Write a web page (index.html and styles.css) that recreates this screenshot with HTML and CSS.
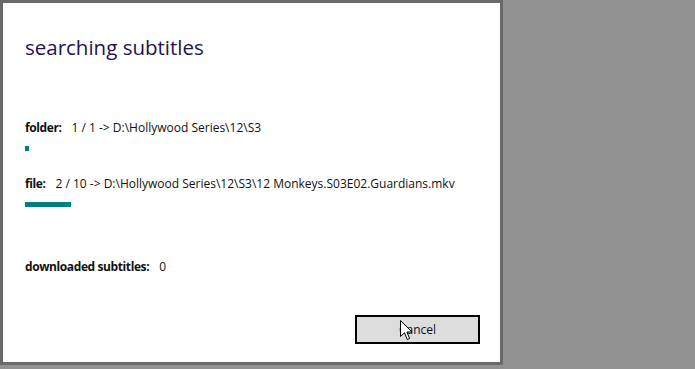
FILE: index.html
```html
<!DOCTYPE html>
<html lang="en">
<head>
    <meta charset="UTF-8">
    <title>searching subtitles</title>
    <link rel="stylesheet" href="styles.css">
</head>
<body>
    <div class="dialog">
        <h1 class="title">searching subtitles</h1>

        <div class="row folder-row">
            <span class="label">folder:</span>
            <span class="value">1 / 1 -&gt; D:\Hollywood Series\12\S3</span>
        </div>
        <div class="bar"><div class="fill" style="width: 4px"></div></div>

        <div class="row file-row">
            <span class="label">file:</span>
            <span class="value">2 / 10 -&gt; D:\Hollywood Series\12\S3\12 Monkeys.S03E02.Guardians.mkv</span>
        </div>
        <div class="bar"><div class="fill" style="width: 46px"></div></div>

        <div class="row downloaded-row">
            <span class="label">downloaded subtitles:</span>
            <span class="value">0</span>
        </div>

        <div class="actions">
            <button class="cancel-button">Cancel</button>
        </div>

        <!-- mouse pointer from the screenshot -->
        <svg class="pointer" width="14" height="22" viewBox="0 0 14 22">
            <path d="M0.5 0.5 L0.5 16.5 L4.5 12.8 L7.3 19.5 L9.6 18.5 L6.9 12 L12 12 Z" fill="#fff" stroke="#000" stroke-width="1"/>
        </svg>
    </div>
</body>
</html>
```

FILE: styles.css
```css
body {
    margin: 0;
    padding: 0;
    background-color: #929292;
    font-family: "Open Sans", "Noto Sans", sans-serif;
    width: 695px;
    height: 369px;
    overflow: hidden;
}
.dialog {
    position: relative;
    box-sizing: border-box;
    width: 503px;
    height: 365px;
    background-color: #fff;
    border: 3px solid #6a6a6a;
    padding: 0 20px 0 22px;
    display: flex;
    flex-direction: column;
}
.title {
    margin: 30px 0 0 0;
    font-size: 20.5px;
    font-weight: normal;
    line-height: 28px;
    color: #24124f;
}
.row {
    display: flex;
    align-items: center;
    font-size: 12px;
    line-height: 16px;
    color: #111;
}
.row .label {
    font-weight: bold;
    letter-spacing: -0.4px;
    margin-right: 10px;
}
.folder-row {
    margin-top: 59px;
}
.file-row {
    margin-top: 25px;
}
.downloaded-row {
    margin-top: 52px;
}
.bar {
    margin-top: 10px;
    height: 5px;
}
.bar .fill {
    height: 100%;
    background-color: #008080;
}
.actions {
    display: flex;
    justify-content: flex-end;
    margin-top: auto;
    margin-bottom: 18px;
}
.cancel-button {
    width: 125px;
    height: 29px;
    box-sizing: border-box;
    background-color: #dddddd;
    border: 2px solid #000;
    font-family: "Open Sans", "Noto Sans", sans-serif;
    font-size: 12px;
    color: #111;
}
.pointer {
    position: absolute;
    left: 397px;
    top: 317px;
}
```
